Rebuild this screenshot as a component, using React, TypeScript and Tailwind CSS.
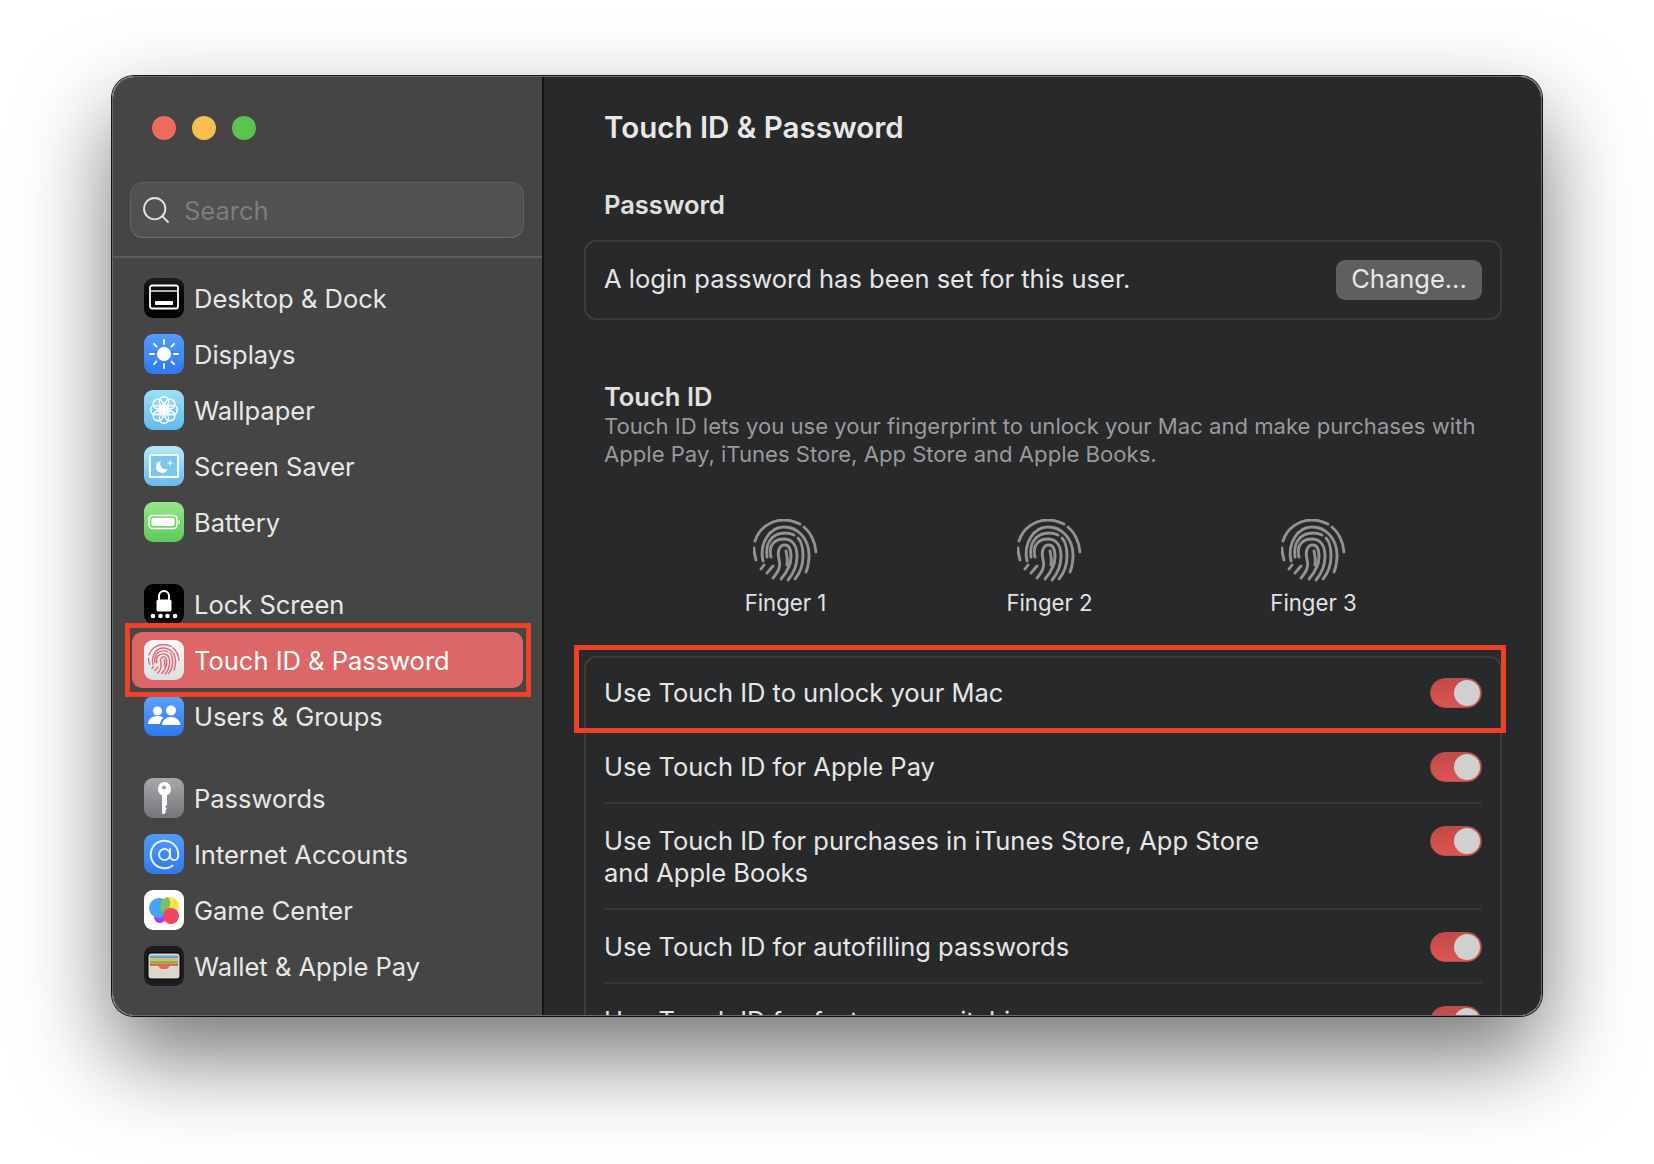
import { Search, AtSign } from "lucide-react";
import type { ReactNode } from "react";

// ---------------------------------------------------------------------------
// Drawn icons
// ---------------------------------------------------------------------------

function FingerprintGlyph({ className }: { className: string }) {
  return (
    <svg viewBox="0 0 65 65" fill="none" strokeLinecap="round" strokeWidth="2.9" className={className}>
      <path d="M2 22C6 9 18 1 31 1C37 1 43 3 47 5" />
      <path d="M51 8C58 14 62 23 63 33" />
      <path d="M1 29C1 33 2 37 3 41" />
      <path d="M8 50L11 46" />
      <path d="M10 42C6 24 17 8 31 8C45 8 56 20 56 36C56 42 55 48 53 53" />
      <path d="M14 38C12 24 19 14 32 14C36 14 39 15 41 16" />
      <path d="M45 19C49 23 50 30 50 37C50 45 47 54 42 60" />
      <path d="M18 38C15 27 21 20 31 20C41 20 44 29 44 37C44 46 41 54 35 61" />
      <path d="M14 54L20 47" />
      <path d="M20 59C26 52 28 47 26 40C24 33 26 26 32 26C37 26 38 32 38 38C38 46 34 53 28 60" />
      <path d="M33 32C34 37 35 41 34 46" />
    </svg>
  );
}

function DesktopIcon() {
  return (
    <div className="flex h-10 w-10 items-center justify-center rounded-[9px] bg-gradient-to-b from-[#1d1d1d] to-black">
      <svg viewBox="0 0 40 40" className="h-10 w-10" fill="none" stroke="white">
        <rect x="6" y="7.5" width="28" height="23" rx="2" strokeWidth="1.8" />
        <path d="M6 13h28" strokeWidth="1.4" />
        <rect x="11" y="23" width="18" height="4" rx="0.6" fill="white" stroke="none" />
      </svg>
    </div>
  );
}

function DisplaysIcon() {
  return (
    <div className="h-10 w-10 rounded-[9px] bg-gradient-to-b from-[#549cfb] to-[#2f78f0]">
      <svg viewBox="0 0 40 40" className="h-10 w-10" stroke="white" strokeWidth="1.8" strokeLinecap="round">
        <circle cx="20" cy="20" r="7" fill="white" stroke="none" />
        <path d="M20 6v4M20 30v4M6 20h4M30 20h4M10 10l2.5 2.5M27.5 27.5L30 30M10 30l2.5-2.5M27.5 12.5L30 10" />
      </svg>
    </div>
  );
}

function WallpaperIcon() {
  const petals = [0, 45, 90, 135, 180, 225, 270, 315];
  return (
    <div className="h-10 w-10 rounded-[9px] bg-gradient-to-b from-[#9be0f5] to-[#5fbcec]">
      <svg viewBox="0 0 40 40" className="h-10 w-10" fill="none" stroke="white" strokeWidth="1.5">
        {petals.map((deg) => (
          <circle key={deg} cx="20" cy="11.5" r="4.8" transform={`rotate(${deg} 20 20)`} />
        ))}
        <circle cx="20" cy="20" r="3" fill="white" stroke="none" />
        <path d="M20 12v16M12 20h16M14.5 14.5l11 11M14.5 25.5l11-11" strokeWidth="1" />
      </svg>
    </div>
  );
}

function ScreenSaverIcon() {
  return (
    <div className="h-10 w-10 rounded-[9px] bg-gradient-to-b from-[#b4e9fb] to-[#69baeb]">
      <svg viewBox="0 0 40 40" className="h-10 w-10">
        <rect x="6" y="9" width="28" height="22" fill="#7cc7ee" stroke="white" strokeWidth="1.8" />
        <path d="M17 15a6 6 0 1 0 6.500 8a5.500 5.500 0 0 1-6.500-8z" fill="white" />
        <path d="M26 13.500l.8 2.700 2.700.8-2.700.8-.8 2.700-.8-2.700-2.700-.8 2.700-.8z" fill="white" />
      </svg>
    </div>
  );
}

function BatteryIcon() {
  return (
    <div className="h-10 w-10 rounded-[9px] bg-gradient-to-b from-[#94e789] to-[#5ec95a]">
      <svg viewBox="0 0 40 40" className="h-10 w-10">
        <rect x="5" y="13.500" width="28" height="13" rx="3.500" fill="none" stroke="white" strokeWidth="1.4" />
        <rect x="7.500" y="16" width="23" height="8" rx="1.600" fill="white" />
        <rect x="34.500" y="18" width="1.500" height="4" rx="0.700" fill="white" />
      </svg>
    </div>
  );
}

function LockIcon() {
  return (
    <div className="h-10 w-10 rounded-[9px] bg-black">
      <svg viewBox="0 0 40 40" className="h-10 w-10">
        <path d="M15 16v-4a5 5 0 0 1 10 0v4" fill="none" stroke="white" strokeWidth="2" />
        <rect x="12.500" y="15.500" width="15" height="12" rx="2" fill="white" />
        {[9, 16.500, 23.500, 31].map((cx) => (
          <circle key={cx} cx={cx} cy="32" r="2.300" fill="white" />
        ))}
      </svg>
    </div>
  );
}

function TouchIdIcon() {
  return (
    <div className="flex h-10 w-10 items-center justify-center rounded-[9px] bg-gradient-to-b from-[#fafafa] to-[#dedede]">
      <FingerprintGlyph className="h-[32px] w-[32px] stroke-[#e0697a]" />
    </div>
  );
}

function UsersIcon() {
  return (
    <div className="h-10 w-10 rounded-[9px] bg-gradient-to-b from-[#5aa2fb] to-[#2f78f0]">
      <svg viewBox="0 0 40 40" className="h-10 w-10" fill="white">
        <circle cx="13.500" cy="15" r="4.500" />
        <circle cx="27" cy="14.500" r="5" />
        <path d="M4 28c0-5 4-8 9.500-8c2.500 0 4.500 .6 6 1.800c-2 1.600-3.200 3.700-3.500 6.200z" />
        <path d="M18 29c.3-5 4-8 9-8s9 3 9.500 8z" />
      </svg>
    </div>
  );
}

function PasswordsIcon() {
  return (
    <div className="h-10 w-10 rounded-[9px] bg-gradient-to-b from-[#a8a8ac] to-[#77777b]">
      <svg viewBox="0 0 40 40" className="h-10 w-10" fill="white">
        <path
          fillRule="evenodd"
          d="M20 4a7 7 0 0 1 3 13.300V27l-1.800 1.800 1.800 1.800-1.800 1.800 1 1.400L20.500 36H18V17.300A7 7 0 0 1 20 4zm0 3.500a2 2 0 1 0 0 4a2 2 0 0 0 0-4z"
        />
      </svg>
    </div>
  );
}

function AccountsIcon() {
  return (
    <div className="flex h-10 w-10 items-center justify-center rounded-[9px] bg-gradient-to-b from-[#4f9cf9] to-[#2f78f0]">
      <AtSign className="h-[33px] w-[33px] text-[#e6f0ff]" strokeWidth={1.5} />
    </div>
  );
}

function GameCenterIcon() {
  return (
    <div className="h-10 w-10 rounded-[9px] bg-white">
      <svg viewBox="0 0 40 40" className="h-10 w-10">
        <circle cx="16" cy="27" r="6" fill="#a13df0" />
        <circle cx="26" cy="16" r="9" fill="#fbe04a" />
        <circle cx="15" cy="18" r="10" fill="#45a4f5" />
        <path d="M24 7.200a9 9 0 0 0-2 17.400a10 10 0 0 0 3-6.600a10 10 0 0 0-1-10.800z" fill="#7cc060" />
        <circle cx="27" cy="26" r="8" fill="#f0455f" />
      </svg>
    </div>
  );
}

function WalletIcon() {
  return (
    <div className="h-10 w-10 rounded-[9px] bg-[#1c1c1c]">
      <svg viewBox="0 0 40 40" className="h-10 w-10">
        <rect x="4" y="7" width="32" height="26" rx="3" fill="#dcd8cc" stroke="black" strokeWidth="1" />
        <rect x="6" y="9.500" width="28" height="3" fill="#5aa7e0" />
        <rect x="6" y="12.500" width="28" height="2.500" fill="#f0b73f" />
        <rect x="6" y="15" width="28" height="2.500" fill="#6fbb5e" />
        <path d="M6 17.500h28v2.500H26l-3 3h-6l-3-3H6z" fill="#e2694f" />
      </svg>
    </div>
  );
}

// ---------------------------------------------------------------------------
// Data
// ---------------------------------------------------------------------------

type NavItem = { label: string; icon: ReactNode; active?: boolean };

const NAV_GROUPS: NavItem[][] = [
  [
    { label: "Desktop & Dock", icon: <DesktopIcon /> },
    { label: "Displays", icon: <DisplaysIcon /> },
    { label: "Wallpaper", icon: <WallpaperIcon /> },
    { label: "Screen Saver", icon: <ScreenSaverIcon /> },
    { label: "Battery", icon: <BatteryIcon /> },
  ],
  [
    { label: "Lock Screen", icon: <LockIcon /> },
    { label: "Touch ID & Password", icon: <TouchIdIcon />, active: true },
    { label: "Users & Groups", icon: <UsersIcon /> },
  ],
  [
    { label: "Passwords", icon: <PasswordsIcon /> },
    { label: "Internet Accounts", icon: <AccountsIcon /> },
    { label: "Game Center", icon: <GameCenterIcon /> },
    { label: "Wallet & Apple Pay", icon: <WalletIcon /> },
  ],
];

const FINGERS = ["Finger 1", "Finger 2", "Finger 3"];

// ---------------------------------------------------------------------------
// Pieces
// ---------------------------------------------------------------------------

function Toggle() {
  return (
    <div className="flex h-[30px] w-[52px] shrink-0 items-center justify-end rounded-full border border-[#b8504e] bg-gradient-to-b from-[#c24a47] to-[#dc5552] pr-[1px]">
      <div className="h-[26px] w-[26px] rounded-full bg-[#d0d0d0]" />
    </div>
  );
}

function ToggleRow({ children }: { children: ReactNode }) {
  return (
    <div className="flex justify-between border-b-2 border-[#35363a] pt-[22px] pb-[19px]">
      <div className="-mt-[1px] w-[700px] text-[25.5px] leading-[32px] text-[#e6e6e6]">{children}</div>
      <Toggle />
    </div>
  );
}

function Sidebar() {
  return (
    <aside className="flex w-[429px] shrink-0 flex-col bg-[#444544]">
      <div className="flex gap-4 pt-[39px] pl-[39px]">
        <div className="h-6 w-6 rounded-full bg-[#ef6a5f]" />
        <div className="h-6 w-6 rounded-full bg-[#f5bf4f]" />
        <div className="h-6 w-6 rounded-full bg-[#5ac451]" />
      </div>
      <div className="mt-[42px] ml-[17px] flex h-[56px] w-[394px] items-center rounded-[13px] border border-[#5f605f] border-b-[#6e6f6e] bg-[#505150] pl-[9px]">
        <Search className="h-[32px] w-[32px] text-[#e4e4e4]" strokeWidth={1.4} />
        <span className="mt-[3px] ml-[12px] text-[25.5px] text-[#7d7e7d]">Search</span>
      </div>
      <div className="mt-[18px] h-[2px] bg-[#5b5c5b]" />
      <nav className="mt-[12px] flex flex-col gap-[26px]">
        {NAV_GROUPS.map((group) => (
          <div key={group[0].label} className="flex flex-col">
            {group.map((item) => (
              <div
                key={item.label}
                className={
                  item.active
                    ? "mx-[19px] flex h-[56px] items-center gap-[10px] rounded-[10px] bg-[#dd6666] pl-[12px] text-[25.5px] text-white"
                    : "mx-[19px] flex h-[56px] items-center gap-[10px] pl-[12px] text-[25.5px] text-[#e8e8e8]"
                }
              >
                {item.icon}
                <span className="mt-[2px]">{item.label}</span>
              </div>
            ))}
          </div>
        ))}
      </nav>
    </aside>
  );
}

function Content() {
  return (
    <main className="min-w-0 flex-1 bg-[#28292b] pr-[39px] pl-[40px]">
      <h1 className="mt-[30px] ml-[20px] h-10 text-[29.5px] leading-10 font-semibold text-[#e8e8e8]">
        Touch ID &amp; Password
      </h1>
      <h2 className="mt-[43px] ml-[20px] h-[30px] text-[25.5px] leading-[30px] font-semibold text-[#e0e0e0]">Password</h2>
      <div className="mt-[20px] flex h-[80px] items-center justify-between rounded-[12px] border-2 border-[#3c3d40] pr-[18px] pl-[18px]">
        <span className="mb-[2px] text-[25.5px] text-[#e6e6e6]">A login password has been set for this user.</span>
        <button className="flex h-10 w-[146px] items-center justify-center rounded-[9px] bg-[#5f5f5f] pb-[2px] text-[25.5px] text-[#e8e8e8]">
          Change...
        </button>
      </div>
      <h2 className="mt-[62px] ml-[20px] h-[30px] text-[25.5px] leading-[30px] font-semibold text-[#e0e0e0]">Touch ID</h2>
      <p className="mt-[1px] ml-[20px] w-[880px] text-[22.1px] leading-[27.5px] text-[#9a9a9b]">
        Touch ID lets you use your fingerprint to unlock your Mac and make purchases with Apple Pay, iTunes Store, App
        Store and Apple Books.
      </p>
      <div className="mt-[51px] ml-[13px] flex justify-center gap-[120px]">
        {FINGERS.map((finger) => (
          <div key={finger} className="flex w-[144px] flex-col items-center">
            <FingerprintGlyph className="h-[65px] w-[65px] stroke-[#929393]" />
            <span className="mt-[4px] text-[22.2px] leading-[30px] text-[#e2e2e2]">{finger}</span>
          </div>
        ))}
      </div>
      <div className="mt-[38px] rounded-t-[12px] border-x-2 border-t-2 border-[#3c3d40] px-[18px]">
        <div className="-mt-[2px]">
          <ToggleRow>Use Touch ID to unlock your Mac</ToggleRow>
          <ToggleRow>Use Touch ID for Apple Pay</ToggleRow>
          <ToggleRow>Use Touch ID for purchases in iTunes Store, App Store and Apple Books</ToggleRow>
          <ToggleRow>Use Touch ID for autofilling passwords</ToggleRow>
          <ToggleRow>Use Touch ID for fast user switching</ToggleRow>
        </div>
      </div>
    </main>
  );
}

export default function App() {
  return (
    <div className="h-[1164px] w-[1654px] overflow-hidden bg-white pt-[76px] pl-[112px] font-['Inter',sans-serif]">
      <div className="relative h-[940px] w-[1430px] rounded-[22px] shadow-[0_40px_90px_rgba(0,0,0,0.55),0_0_0_1px_#1a1a1a]">
        <div className="flex h-full overflow-hidden rounded-[22px] border border-[#6a6a6a]">
          <Sidebar />
          <div className="w-[2px] shrink-0 bg-[#141414]" />
          <Content />
        </div>
        <div className="absolute top-[547px] left-[13px] h-[74px] w-[406px] border-[5px] border-[#ee4125]" />
        <div className="absolute top-[569px] left-[462px] h-[88px] w-[932px] border-[5px] border-[#ee4125]" />
      </div>
    </div>
  );
}
